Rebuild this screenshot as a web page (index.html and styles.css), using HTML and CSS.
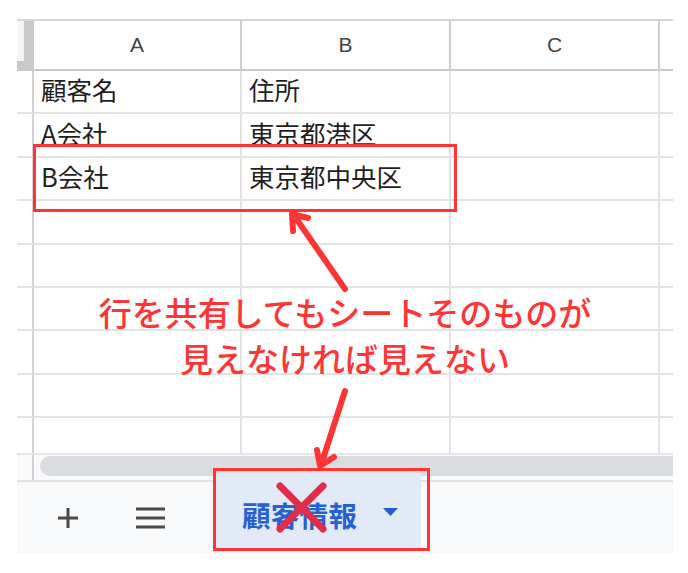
FILE: index.html
```html
<!DOCTYPE html>
<html lang="ja">
<head>
<meta charset="utf-8">
<link rel="stylesheet" href="styles.css">
</head>
<body>
<div class="page">
  <div class="sheet">
    <div class="grid">
      <div class="corner"></div>
      <div class="colhead">A</div>
      <div class="colhead">B</div>
      <div class="colhead">C</div>
      <div class="colhead edge"></div>

      <div class="rh"></div><div class="cell">顧客名</div><div class="cell">住所</div><div class="cell"></div><div class="cell edge"></div>
      <div class="rh"></div><div class="cell">A会社</div><div class="cell">東京都港区</div><div class="cell"></div><div class="cell edge"></div>
      <div class="rh"></div><div class="cell">B会社</div><div class="cell">東京都中央区</div><div class="cell"></div><div class="cell edge"></div>
      <div class="rh"></div><div class="cell"></div><div class="cell"></div><div class="cell"></div><div class="cell edge"></div>
      <div class="rh"></div><div class="cell"></div><div class="cell"></div><div class="cell"></div><div class="cell edge"></div>
      <div class="rh"></div><div class="cell"></div><div class="cell"></div><div class="cell"></div><div class="cell edge"></div>
      <div class="rh"></div><div class="cell"></div><div class="cell"></div><div class="cell"></div><div class="cell edge"></div>
      <div class="rh"></div><div class="cell"></div><div class="cell"></div><div class="cell"></div><div class="cell edge"></div>
      <div class="rh last"></div><div class="cell last"></div><div class="cell last"></div><div class="cell last"></div><div class="cell edge last"></div>
    </div>
    <div class="hscroll">
      <div class="hs-rh"></div>
      <div class="thumb"></div>
    </div>
    <div class="tabbar">
      <span class="tb-icon plus">
        <svg width="22" height="22" viewBox="0 0 22 22"><path d="M11 1v20M1 11h20" stroke="#4a4a4a" stroke-width="3" fill="none"/></svg>
      </span>
      <span class="tb-icon menu">
        <svg width="29" height="22" viewBox="0 0 29 22"><path d="M0 2h29M0 11h29M0 20h29" stroke="#4a4a4a" stroke-width="3" fill="none"/></svg>
      </span>
      <div class="tab">
        <span class="tab-name">顧客情報</span>
        <svg class="caret" width="15" height="8" viewBox="0 0 15 8"><path d="M0 0h15L7.5 8z" fill="#1f5fd6"/></svg>
      </div>
    </div>
  </div>

  <div class="callout box-row"></div>
  <div class="callout box-tab"></div>

  <svg class="overlay" width="688" height="573" viewBox="0 0 688 573">
    <g stroke="#ff3535" stroke-width="6" fill="none" stroke-linecap="round" stroke-linejoin="round">
      <path d="M345 289L293 214"/>
      <path d="M293 231L292 214L308 218"/>
      <path d="M345 391L321 465"/>
      <path d="M317 450L320 466L334 457"/>
    </g>
    <path d="M280 486L323 529M323 486L280 529" stroke="#df2d4a" stroke-width="7" stroke-linecap="round" fill="none"/>
  </svg>

  <p class="note">行を共有してもシートそのものが<br>見えなければ見えない</p>
</div>
</body>
</html>
```

FILE: styles.css
```css
* { box-sizing: border-box; }
html, body { margin: 0; padding: 0; background: #ffffff; }
body { font-family: "Noto Sans CJK JP", "Noto Sans", sans-serif; }

.page {
  position: relative;
  width: 688px;
  height: 573px;
  overflow: hidden;
  background: #ffffff;
}

.sheet {
  margin: 19px 0 0 17px;
  width: 656px;
}

.grid {
  display: grid;
  grid-template-columns: 17px 208px 209px 209px 13px;
  grid-template-rows: 50px repeat(8, 43.4px) 35px;
  border-top: 2px solid #d6d6d6;
}

.corner {
  background: #f4f5f7;
  border-right: 10px solid #c9c9c9;
  border-bottom: 10px solid #c9c9c9;
}

.colhead {
  display: flex;
  align-items: center;
  justify-content: center;
  font-family: "Liberation Sans", "Noto Sans", sans-serif;
  font-size: 21px;
  color: #444444;
  border-right: 2px solid #cdcdcd;
  border-bottom: 2px solid #c8c8c8;
  background: #ffffff;
}
.colhead.edge { border-right: none; }

.rh {
  border-right: 2px solid #d2d2d2;
  border-bottom: 2px solid #e3e3e3;
}

.cell {
  display: flex;
  align-items: center;
  padding-left: 7px;
  padding-bottom: 6px;
  font-size: 25.5px;
  color: #1f1f1f;
  border-right: 2px solid #e3e3e3;
  border-bottom: 2px solid #e3e3e3;
  white-space: nowrap;
}
.cell.edge { border-right: none; }
.last { border-bottom: none; }

.hscroll {
  display: flex;
  height: 27px;
  background: #f8f9fa;
  border-top: 2px solid #e6e6e6;
}
.hs-rh {
  width: 17px;
  border-right: 2px solid #d2d2d2;
}
.thumb {
  flex: 1;
  margin: 1px 0 4px 6px;
  height: 20px;
  border-radius: 10px 0 0 10px;
  background: #dadce0;
}

.tabbar {
  display: flex;
  align-items: stretch;
  height: 73px;
  background: #f8f9fa;
  border-top: 2px solid #e3e3e3;
}
.tb-icon {
  display: flex;
  align-items: center;
  justify-content: center;
}
.plus { margin-left: 40px; width: 22px; }
.menu { margin-left: 57px; width: 29px; }

.tab {
  display: flex;
  align-items: center;
  margin: -9px 0 3px 48px;
  width: 208px;
  padding-left: 29px;
  padding-top: 5px;
  background: #e2e9f7;
}
.tab-name {
  font-size: 28.5px;
  font-weight: 700;
  color: #2462d4;
  letter-spacing: 0.3px;
}
.caret { margin-left: 26px; margin-top: -4px; }

.callout {
  position: absolute;
  border: 3px solid #ff3434;
}
.box-row { left: 33px; top: 144px; width: 424px; height: 68px; }
.box-tab { left: 213px; top: 468px; width: 217px; height: 83px; }

.overlay {
  position: absolute;
  left: 0;
  top: 0;
  pointer-events: none;
}

.note {
  position: absolute;
  left: 0;
  top: 289px;
  width: 690px;
  margin: 0;
  text-align: center;
  font-size: 33px;
  font-weight: 500;
  line-height: 46px;
  color: #ff3535;
  background: transparent;
}
```
